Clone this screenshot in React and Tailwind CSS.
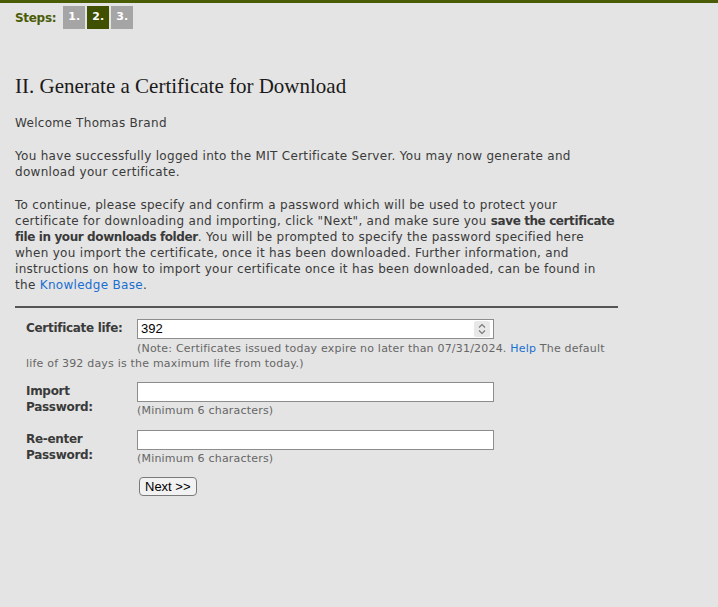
export default function App() {
  const body = { fontFamily: '"DejaVu Sans", Verdana, sans-serif' };
  return (
    <div className="min-h-[607px] bg-[#e4e4e4] text-[#3a3a3a]" style={body}>
      {/* top bar */}
      <div className="h-[3px] bg-[#4b5c07]" />
      <div className="flex items-center gap-[7px] px-[15px] pt-[3px]">
        <span className="text-[12px] font-bold tracking-[-0.3px] text-[#4b5c07]">Steps:</span>
        <div className="flex gap-[2px]">
          <span className="flex h-[23px] w-[22px] items-center justify-center bg-[#a5a5a5] text-[11px] font-bold text-white">1.</span>
          <span className="flex h-[23px] w-[22px] items-center justify-center bg-[#3f5000] text-[11px] font-bold text-white">2.</span>
          <span className="flex h-[23px] w-[22px] items-center justify-center bg-[#a5a5a5] text-[11px] font-bold text-white">3.</span>
        </div>
      </div>

      <div className="px-[15px] pt-[44px]">
        <h1 className="text-[21px] leading-[26px] text-[#1a1a1a]" style={{ fontFamily: '"Liberation Serif", "DejaVu Serif", serif' }}>
          II. Generate a Certificate for Download
        </h1>

        <div className="mt-[16px] w-[640px] whitespace-nowrap text-[12px] leading-[16px] tracking-[0.3px]">
          <p className="mb-[17px]">Welcome Thomas Brand</p>
          <p className="mb-[17px]">
            You have successfully logged into the MIT Certificate Server. You may now generate and<br />
            download your certificate.
          </p>
          <p>
            To continue, please specify and confirm a password which will be used to protect your<br />
            certificate for downloading and importing, click "Next", and make sure you <b className="tracking-[-0.4px]">save the certificate<br />
            file in your downloads folder</b>. You will be prompted to specify the password specified here<br />
            when you import the certificate, once it has been downloaded. Further information, and<br />
            instructions on how to import your certificate once it has been downloaded, can be found in<br />
            the <a className="text-[#1a6fd0]">Knowledge Base</a>.
          </p>
        </div>

        <div className="mt-[13px] h-[2px] w-[603px] bg-[#555]" />

        {/* form */}
        <div className="w-[603px] pl-[11px] pt-[11px] text-[12px] leading-[16px]">
          <div className="flex items-start">
            <label className="w-[111px] pt-[1px] font-bold tracking-[-0.3px]">Certificate life:</label>
            <div className="relative h-[20px] w-[357px] border border-[#8d8d8d] bg-white">
              <span className="pl-[3px] text-[13px] leading-[18px] text-black" style={{ fontFamily: '"Liberation Sans", Arial, sans-serif' }}>392</span>
              <span className="absolute right-[3px] top-[1px] flex h-[16px] w-[16px] flex-col items-center justify-center rounded-[2px] bg-[#e8e8e8]">
                <svg width="8" height="12" viewBox="0 0 8 12" fill="none" stroke="#777" strokeWidth="1.1">
                  <path d="M1 4.5 L4 1.5 L7 4.5" />
                  <path d="M1 7.5 L4 10.5 L7 7.5" />
                </svg>
              </span>
            </div>
          </div>
          <p className="mt-[2px] indent-[111px] text-[11px] leading-[15px] tracking-[0.2px] text-[#666]">
            (Note: Certificates issued today expire no later than 07/31/2024. <a className="text-[#1a6fd0]">Help</a> The default life of 392 days is the maximum life from today.)
          </p>

          <div className="mt-[11px] flex items-start">
            <label className="w-[111px] pt-[1px] font-bold tracking-[-0.3px]">Import<br />Password:</label>
            <div>
              <div className="h-[20px] w-[357px] border border-[#8d8d8d] bg-white" />
              <p className="mt-[1px] text-[11px] leading-[15px] tracking-[0.2px] text-[#666]">(Minimum 6 characters)</p>
            </div>
          </div>

          <div className="mt-[12px] flex items-start">
            <label className="w-[111px] pt-[1px] font-bold tracking-[-0.3px]">Re-enter<br />Password:</label>
            <div>
              <div className="h-[20px] w-[357px] border border-[#8d8d8d] bg-white" />
              <p className="mt-[1px] text-[11px] leading-[15px] tracking-[0.2px] text-[#666]">(Minimum 6 characters)</p>
            </div>
          </div>

          <div className="mt-[11px] pl-[113px]">
            <button className="h-[19px] rounded-[4px] border border-[#7a7a7a] bg-[#f2f2f2] px-[5px] text-[13px] leading-[17px] text-black" style={{ fontFamily: '"Liberation Sans", Arial, sans-serif' }}>
              Next &gt;&gt;
            </button>
          </div>
        </div>
      </div>
    </div>
  );
}
